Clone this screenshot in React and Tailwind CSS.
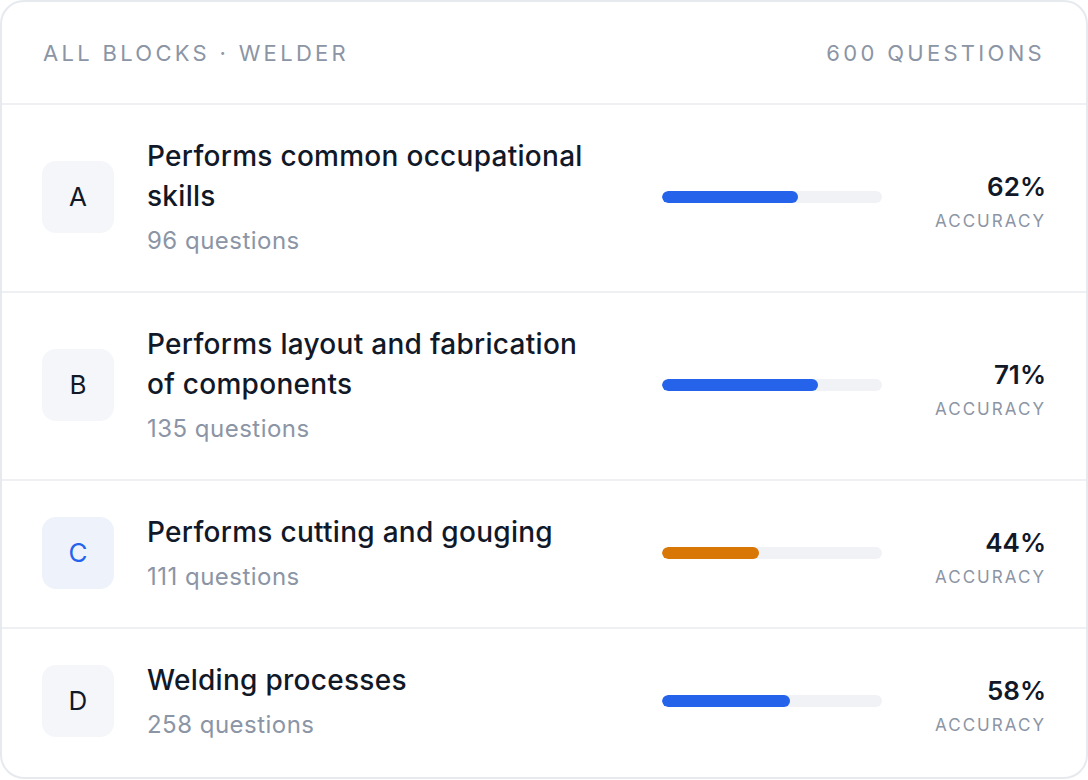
const blocks = [
  { letter: "A", title: "Performs common occupational skills", count: 96, pct: 62 },
  { letter: "B", title: "Performs layout and fabrication of components", count: 135, pct: 71 },
  { letter: "C", title: "Performs cutting and gouging", count: 111, pct: 44, active: true, warn: true },
  { letter: "D", title: "Welding processes", count: 258, pct: 58 },
];

function BlockRow({ block }) {
  return (
    <div className="flex items-center px-[40px] pt-[31px] pb-[34px] border-t-2 border-[#eef0f4]">
      <div
        className={`w-[72px] h-[72px] shrink-0 rounded-[14px] flex items-center justify-center text-[26px] ${
          block.active ? "bg-[#eef2fb] text-[#2563eb]" : "bg-[#f4f6f9] text-[#111827]"
        }`}
      >
        {block.letter}
      </div>
      <div className="flex-1 ml-[33px] mr-[62px]">
        <div className="text-[28px] leading-[40px] font-medium tracking-[0.01em] text-[#111827]">{block.title}</div>
        <div className="text-[24px] leading-[32px] mt-[9px] tracking-[0.02em] text-[#8b95a5]">{block.count} questions</div>
      </div>
      <div className="w-[220px] h-[12px] rounded-full bg-[#f0f2f5] shrink-0 overflow-hidden">
        <div
          className={`h-full rounded-full ${block.warn ? "bg-[#d97706]" : "bg-[#2563eb]"}`}
          style={{ width: `${block.pct}%` }}
        />
      </div>
      <div className="w-[164px] shrink-0 pt-[10px] text-right">
        <div className="text-[26px] leading-[32px] font-semibold text-[#111827]">{block.pct}%</div>
        <div className="text-[17px] leading-[24px] mt-[6px] tracking-[0.12em] text-[#8b95a5]">ACCURACY</div>
      </div>
    </div>
  );
}

export default function App() {
  return (
    <div className="w-[1088px] h-[780px] bg-white" style={{ fontFamily: "Inter, 'Noto Sans', sans-serif" }}>
      <div className="h-[779px] border-2 border-[#e6e9ee] rounded-[24px] overflow-hidden bg-white">
        <div className="h-[101px] pt-[2px] flex items-center justify-between px-[41px] text-[22px] tracking-[0.15em] text-[#8b95a5]">
          <span>ALL BLOCKS · WELDER</span>
          <span>600 QUESTIONS</span>
        </div>
        {blocks.map((b) => (
          <BlockRow key={b.letter} block={b} />
        ))}
      </div>
    </div>
  );
}
